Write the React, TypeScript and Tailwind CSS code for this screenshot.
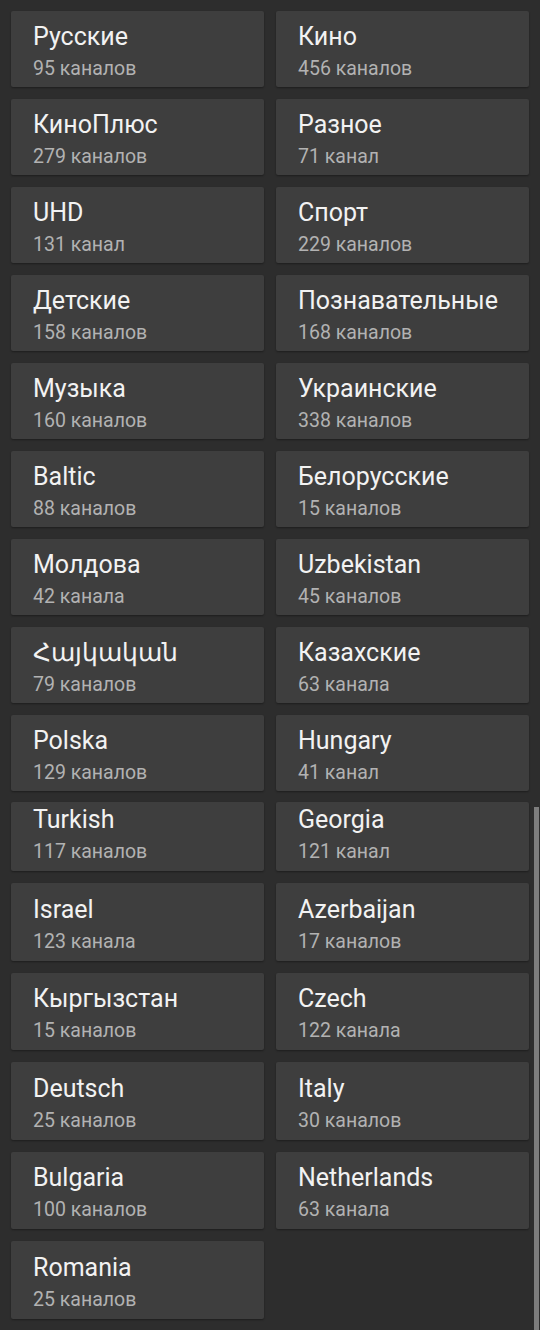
const upper = [
  ['Русские', '95 каналов'],
  ['Кино', '456 каналов'],
  ['КиноПлюс', '279 каналов'],
  ['Разное', '71 канал'],
  ['UHD', '131 канал'],
  ['Спорт', '229 каналов'],
  ['Детские', '158 каналов'],
  ['Познавательные', '168 каналов'],
  ['Музыка', '160 каналов'],
  ['Украинские', '338 каналов'],
  ['Baltic', '88 каналов'],
  ['Белорусские', '15 каналов'],
  ['Молдова', '42 канала'],
  ['Uzbekistan', '45 каналов'],
  ['Հայկական', '79 каналов'],
  ['Казахские', '63 канала'],
  ['Polska', '129 каналов'],
  ['Hungary', '41 канал'],
];

const partial = [
  ['Turkish', '117 каналов'],
  ['Georgia', '121 канал'],
];

const lower = [
  ['Israel', '123 канала'],
  ['Azerbaijan', '17 каналов'],
  ['Кыргызстан', '15 каналов'],
  ['Czech', '122 канала'],
  ['Deutsch', '25 каналов'],
  ['Italy', '30 каналов'],
  ['Bulgaria', '100 каналов'],
  ['Netherlands', '63 канала'],
  ['Romania', '25 каналов'],
];

function Card({ name, count, h, pt }: { name: string; count: string; h: string; pt: string }) {
  return (
    <div className={`bg-[#3e3e3e] rounded-[2px] shadow-[0_1px_2px_rgba(0,0,0,0.35)] px-[22px] ${h} ${pt}`}>
      <div className="text-[25px] leading-[26px] text-[#f2f2f2] whitespace-nowrap">{name}</div>
      <div className="text-[19.5px] leading-[22px] text-[#b2b2b2] mt-[8px] whitespace-nowrap">{count}</div>
    </div>
  );
}

export default function App() {
  return (
    <div
      className="relative w-[540px] h-[1330px] overflow-hidden bg-[#2d2d2d]"
      style={{ fontFamily: 'Roboto, "Noto Sans", sans-serif' }}
    >
      <div className="px-[11px] pt-[11px]">
        <div className="grid grid-cols-2 gap-x-[12px] gap-y-[12px]">
          {upper.map(([n, c]) => (
            <Card key={n} name={n} count={c} h="h-[76px]" pt="pt-[13px]" />
          ))}
        </div>
        <div className="grid grid-cols-2 gap-x-[12px] mt-[11px]">
          {partial.map(([n, c]) => (
            <Card key={n} name={n} count={c} h="h-[69px]" pt="pt-[5px]" />
          ))}
        </div>
        <div className="grid grid-cols-2 gap-x-[12px] gap-y-[12px] mt-[12px]">
          {lower.map(([n, c]) => (
            <Card key={n} name={n} count={c} h="h-[77.5px]" pt="pt-[13.5px]" />
          ))}
        </div>
      </div>
      <div className="absolute left-[534px] w-[5px] top-[807px] bottom-0 bg-[#7d7d7d]" />
    </div>
  );
}
